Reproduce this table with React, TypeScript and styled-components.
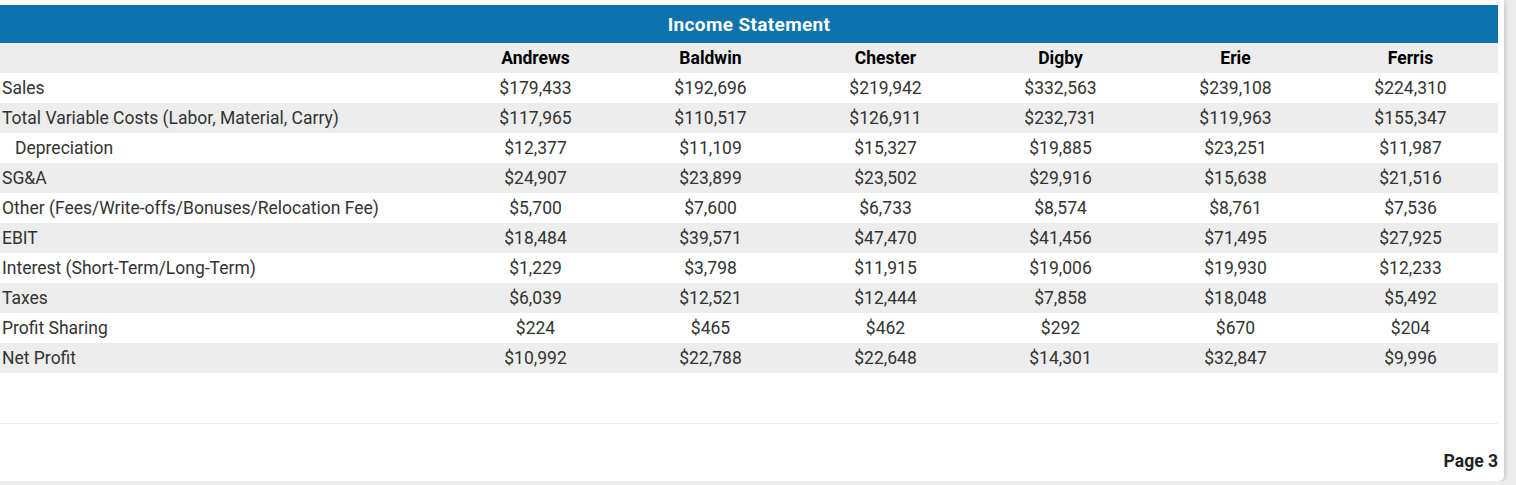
import styled, { createGlobalStyle } from 'styled-components'

const GlobalStyle = createGlobalStyle`
    html, body {
        margin: 0;
        padding: 0;
        background-color: #ececec;
        font-family: Roboto, "Liberation Sans", Arial, sans-serif;
    }
`

type RowProps = {
    striped?: boolean;
}

type LabelProps = {
    indent?: boolean;
}

const Card = styled.div`
    width: 1498px;
    padding: 5px 6px 10px 0;
    background-color: #ffffff;
    border-radius: 0 0 5px 0;
    box-shadow: 1px 1px 4px rgba(0, 0, 0, 0.18);
`

const TitleBar = styled.div`
    height: 38px;
    background-color: #0d73ad;
    color: #ffffff;
    font-size: 19px;
    font-weight: 700;
    letter-spacing: 0.35px;
    display: flex;
    align-items: center;
    justify-content: center;
`

const Table = styled.table`
    width: 1498px;
    border-collapse: collapse;
    table-layout: fixed;
    font-size: 17.5px;
    color: #333333;
`

const Row = styled.tr<RowProps>`
    height: 30px;
    background-color: ${props => props.striped ? '#ededed' : '#ffffff'};
`

const HeadCell = styled.th`
    width: 175px;
    padding: 0;
    font-weight: 700;
    color: #000000;
    text-align: center;
`

const LabelCell = styled.td<LabelProps>`
    padding: 0 0 0 ${props => props.indent ? '15px' : '2px'};
    text-align: left;
    white-space: nowrap;
`

const ValueCell = styled.td`
    padding: 0;
    text-align: center;
`

const Spacer = styled.div`
    height: 50px;
`

const Divider = styled.hr`
    margin: 0;
    border: none;
    border-top: 1px solid #ececec;
`

const Footer = styled.div`
    display: flex;
    justify-content: flex-end;
    padding-top: 27px;
    font-size: 17.5px;
    font-weight: 700;
    color: #222222;
`

const teams = ['Andrews', 'Baldwin', 'Chester', 'Digby', 'Erie', 'Ferris']

const rows: { label: string; indent?: boolean; values: string[] }[] = [
    { label: 'Sales', values: ['$179,433', '$192,696', '$219,942', '$332,563', '$239,108', '$224,310'] },
    { label: 'Total Variable Costs (Labor, Material, Carry)', values: ['$117,965', '$110,517', '$126,911', '$232,731', '$119,963', '$155,347'] },
    { label: 'Depreciation', indent: true, values: ['$12,377', '$11,109', '$15,327', '$19,885', '$23,251', '$11,987'] },
    { label: 'SG&A', values: ['$24,907', '$23,899', '$23,502', '$29,916', '$15,638', '$21,516'] },
    { label: 'Other (Fees/Write-offs/Bonuses/Relocation Fee)', values: ['$5,700', '$7,600', '$6,733', '$8,574', '$8,761', '$7,536'] },
    { label: 'EBIT', values: ['$18,484', '$39,571', '$47,470', '$41,456', '$71,495', '$27,925'] },
    { label: 'Interest (Short-Term/Long-Term)', values: ['$1,229', '$3,798', '$11,915', '$19,006', '$19,930', '$12,233'] },
    { label: 'Taxes', values: ['$6,039', '$12,521', '$12,444', '$7,858', '$18,048', '$5,492'] },
    { label: 'Profit Sharing', values: ['$224', '$465', '$462', '$292', '$670', '$204'] },
    { label: 'Net Profit', values: ['$10,992', '$22,788', '$22,648', '$14,301', '$32,847', '$9,996'] },
]

export default function App() {
    return (
        <>
            <GlobalStyle />
            <Card>
                <TitleBar>Income Statement</TitleBar>
                <Table>
                    <colgroup>
                        <col style={{ width: 448 }} />
                        {teams.map(t => <col key={t} style={{ width: 175 }} />)}
                    </colgroup>
                    <thead>
                        <Row striped>
                            <th />
                            {teams.map(t => <HeadCell key={t}>{t}</HeadCell>)}
                        </Row>
                    </thead>
                    <tbody>
                        {rows.map((r, i) => (
                            <Row key={r.label} striped={i % 2 === 1}>
                                <LabelCell indent={r.indent}>{r.label}</LabelCell>
                                {r.values.map((v, j) => <ValueCell key={j}>{v}</ValueCell>)}
                            </Row>
                        ))}
                    </tbody>
                </Table>
                <Spacer />
                <Divider />
                <Footer>Page 3</Footer>
            </Card>
        </>
    )
}
